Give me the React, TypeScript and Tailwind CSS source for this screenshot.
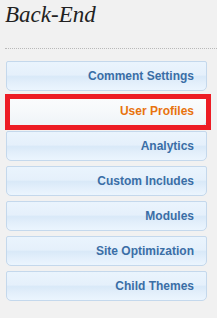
const ITEMS = [
  { id: "comment", label: "Comment Settings" },
  { id: "profiles", label: "User Profiles" },
  { id: "analytics", label: "Analytics" },
  { id: "includes", label: "Custom Includes" },
  { id: "modules", label: "Modules" },
  { id: "optimization", label: "Site Optimization" },
  { id: "themes", label: "Child Themes" },
];

const ACTIVE = "profiles";

function NavButton({ label, isActive }: { label: string; isActive: boolean }) {
  return (
    <div className="relative">
      <button
        className={
          isActive
            ? "w-full h-[30px] flex items-center justify-end pr-[12px] border border-[#c9dbec] rounded-t-[2px] rounded-b-[5px] bg-[linear-gradient(to_bottom,#fbfcfd_0%,#f6f9fb_50%,#eff4f8_100%)] text-[#e8730f] text-[12px] font-bold font-['Liberation_Sans',Arial,sans-serif]"
            : "w-full h-[30px] flex items-center justify-end pr-[12px] border border-[#c4d8ec] rounded-t-[2px] rounded-b-[5px] bg-[linear-gradient(to_bottom,#eaf4fd_0%,#e5f0fb_46%,#d9e9f8_52%,#e3effb_75%,#ebf5fe_100%)] text-[#3a6ea6] text-[12px] font-bold font-['Liberation_Sans',Arial,sans-serif]"
        }
      >
        {label}
      </button>
      {isActive && (
        <div className="absolute -left-[1px] -top-[2px] w-[206px] h-[36px] border-[5px] border-[#ed1c24] pointer-events-none" />
      )}
    </div>
  );
}

export default function App() {
  return (
    <div className="w-[217px] h-[318px] bg-[#f1f1f1] overflow-hidden">
      <div className="ml-[5px] h-[49px] border-b border-dotted border-[#b9b9b9]">
        <h1 className="pt-[1px] leading-[28px] text-[23px] italic text-[#222] font-['Liberation_Serif','Times_New_Roman',serif]">
          Back-End
        </h1>
      </div>
      <div className="ml-[6px] mt-[12px] w-[201px] flex flex-col gap-[5px]">
        {ITEMS.map((item) => (
          <NavButton key={item.id} label={item.label} isActive={item.id === ACTIVE} />
        ))}
      </div>
    </div>
  );
}
